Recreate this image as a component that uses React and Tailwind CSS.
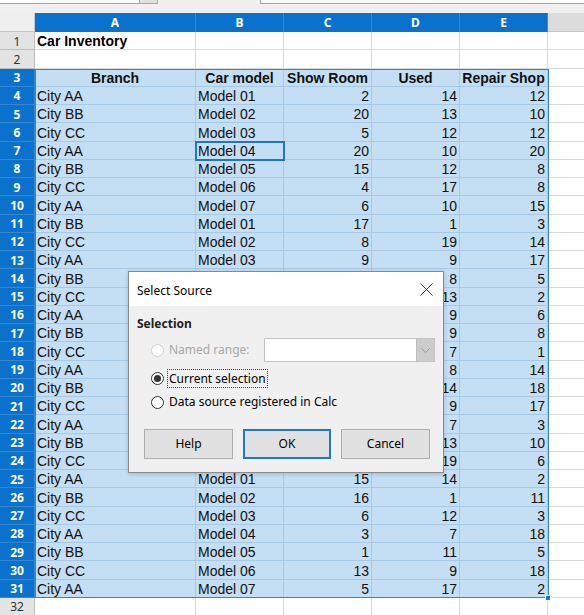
import { X } from 'lucide-react';

const UI_FONT = { fontFamily: '"Noto Sans", "Open Sans", sans-serif' };
const CELL_FONT = { fontFamily: '"Liberation Sans", Arial, sans-serif' };

const COLS = [
  { key: 'A', w: 'w-[161px]', align: 'left' },
  { key: 'B', w: 'w-[88px]', align: 'left' },
  { key: 'C', w: 'w-[88px]', align: 'right' },
  { key: 'D', w: 'w-[88px]', align: 'right' },
  { key: 'E', w: 'w-[88px]', align: 'right' },
];

const header = ['Branch', 'Car model', 'Show Room', 'Used', 'Repair Shop'];

const cities = ['City AA', 'City BB', 'City CC'];
const showRoom = [2, 20, 5, 20, 15, 4, 6, 17, 8, 9, 11, 7, 3, 12, 18, 2, 10, 14, 6, 19, 9, 15, 16, 6, 3, 1, 13, 5];
const used = [14, 13, 12, 10, 12, 17, 10, 1, 19, 9, 8, 13, 9, 9, 7, 8, 14, 9, 7, 13, 19, 14, 1, 12, 7, 11, 9, 17];
const repair = [12, 10, 12, 20, 8, 8, 15, 3, 14, 17, 5, 2, 6, 8, 1, 14, 18, 17, 3, 10, 6, 2, 11, 3, 18, 5, 18, 2];

// rows 14-24 of B and C sit under the dialog, so they are left empty
const data = showRoom.map((s, i) => {
  const covered = i >= 10 && i <= 20;
  return [cities[i % 3], covered ? '' : `Model 0${(i % 7) + 1}`, covered ? '' : s, used[i], repair[i]];
});

function RowHeader({ n, selected }) {
  return selected ? (
    <div className="w-[35px] h-full flex items-center justify-center pt-[2px] bg-[#0a72cc] border-r border-b border-[#3487d3] text-white font-bold text-[12px]" style={UI_FONT}>
      {n}
    </div>
  ) : (
    <div className="w-[35px] h-full flex items-center justify-center pt-[2px] bg-[#e3e3e3] border-r border-b border-[#bdbdbd] text-[#333] text-[12px]" style={UI_FONT}>
      {n}
    </div>
  );
}

function PlainRow({ n, children }) {
  return (
    <div className="flex h-[18.25px]">
      <RowHeader n={n} />
      {COLS.map((c, i) => (
        <div key={c.key} className={`${c.w} h-full border-r border-b border-[#d9d9d9] bg-white flex items-end pb-[1px] px-[2px] text-[14px] leading-[14px] text-black`} style={CELL_FONT}>
          {i === 0 ? children : null}
        </div>
      ))}
      <div className="flex-1 h-full border-b border-[#d9d9d9] bg-white" />
    </div>
  );
}

function DataRow({ n, cells, bold }) {
  return (
    <div className="flex h-[18.25px]">
      <RowHeader n={n} selected />
      {COLS.map((c, i) => (
        <div
          key={c.key}
          className={`${c.w} h-full border-r border-b border-[#a8c9e6] bg-[#c4def4] flex items-end pb-[1px] px-[2px] text-[14px] leading-[14px] text-[#111] whitespace-nowrap overflow-hidden ${
            bold ? 'justify-center font-bold' : c.align === 'right' ? 'justify-end' : 'justify-start'
          }`}
          style={CELL_FONT}
        >
          {cells[i]}
        </div>
      ))}
      <div className="flex-1 h-full border-b border-[#d9d9d9] bg-white" />
    </div>
  );
}

function Radio({ checked, disabled }) {
  return (
    <span
      className={`w-[13px] h-[13px] rounded-full border flex items-center justify-center bg-white ${
        disabled ? 'border-[#cfcfcf]' : 'border-[#333]'
      }`}
    >
      {checked && <span className="w-[7px] h-[7px] rounded-full bg-[#333]" />}
    </span>
  );
}

function SelectSourceDialog() {
  return (
    <div className="absolute left-[128px] top-[271px] w-[316px] h-[202px] border border-[#8a8a8a] bg-[#f0f0f0] shadow-[0_1px_4px_rgba(0,0,0,0.18)] flex flex-col" style={UI_FONT}>
      <div className="h-[34px] bg-white flex items-center justify-between pt-[3px] pl-[8px] pr-[5px] text-[12px] text-black">
        <span>Select Source</span>
        <X size={23} strokeWidth={0.9} className="text-[#222] -mt-[3px]" />
      </div>
      <div className="flex flex-col text-[12px]">
        <div className="mt-[10px] h-[16px] pl-[8px] flex items-center font-bold text-[#222]">Selection</div>
        <div className="mt-[6px] h-[24px] flex items-center">
          <div className="w-[135px] pl-[22px] flex items-center gap-[5px] text-[#a8a8a8]">
            <Radio disabled />
            <span>Named range:</span>
          </div>
          <div className="w-[171px] h-[24px] flex border border-[#c4c4c4] bg-white">
            <div className="flex-1" />
            <div className="w-[18px] h-full bg-[#cccccc] border-l border-[#bdbdbd] flex items-center justify-center">
              <svg width="9" height="5" viewBox="0 0 9 5" fill="none">
                <path d="M0.5 0.5 L4.5 4.5 L8.5 0.5" stroke="#9a9a9a" strokeWidth="1" />
              </svg>
            </div>
          </div>
        </div>
        <div className="mt-[6px] h-[20px] pl-[22px] flex items-center gap-[5px] text-black">
          <Radio checked />
          <span className="border border-dotted border-[#444] px-[1px] leading-[17px] -ml-[2px]">Current selection</span>
        </div>
        <div className="mt-[4px] h-[20px] pl-[22px] flex items-center gap-[5px] text-black">
          <Radio />
          <span>Data source registered in Calc</span>
        </div>
        <div className="mt-[17px] pl-[15px] flex gap-[10px]">
          <button className="w-[89px] h-[30px] bg-[#e1e1e1] border border-[#adadad] text-[12px] text-black">Help</button>
          <button className="w-[88px] h-[30px] bg-[#e1e1e1] border-2 border-[#1b78d3] text-[12px] text-black">OK</button>
          <button className="w-[89px] h-[30px] bg-[#e1e1e1] border border-[#adadad] text-[12px] text-black">Cancel</button>
        </div>
      </div>
    </div>
  );
}

export default function App() {
  return (
    <div className="w-[584px] h-[615px] overflow-hidden bg-[#f0f0f0] relative">
      {/* top of the name box and formula bar */}
      <div className="h-[13px] flex items-start">
        <div className="w-[140px] h-[4px] bg-white border-b border-r border-[#a9a9a9]" />
        <div className="w-[18px] h-[4px] bg-[#e1e1e1] border-b border-r border-[#a9a9a9]" />
        <div className="w-[102px]" />
        <div className="flex-1 h-[4px] bg-white border-b border-l border-[#a9a9a9]" />
      </div>

      {/* column headers */}
      <div className="flex h-[19px]">
        <div className="w-[35px] h-full bg-[#efefef] border-r border-b border-[#c6c6c6]" />
        {COLS.map((c) => (
          <div key={c.key} className={`${c.w} h-full bg-[#0a72cc] border-r border-[#3487d3] flex items-center justify-center pt-[1px] text-white font-bold text-[12px]`} style={UI_FONT}>
            {c.key}
          </div>
        ))}
        <div className="flex-1 h-full bg-[#dcdcdc] border-b border-[#c6c6c6]" />
      </div>

      <div className="relative">
        <PlainRow n={1}>
          <span className="font-bold">Car Inventory</span>
        </PlainRow>
        <PlainRow n={2} />
        <DataRow n={3} cells={header} bold />
        {data.map((r, i) => (
          <DataRow key={i} n={i + 4} cells={r} />
        ))}
        <PlainRow n={32} />

        {/* selection outline and fill handle */}
        <div className="absolute left-[35px] top-[36.5px] w-[514px] h-[529.5px] border border-[#2f86d6] pointer-events-none" />
        <div className="absolute left-[545px] top-[563px] w-[6px] h-[6px] bg-[#1a73d0] border border-white" />
        {/* cell cursor on B7 */}
        <div className="absolute left-[195px] top-[109px] w-[90px] h-[20px] border-2 border-[#1e74cf] pointer-events-none" />
      </div>

      <SelectSourceDialog />
    </div>
  );
}
